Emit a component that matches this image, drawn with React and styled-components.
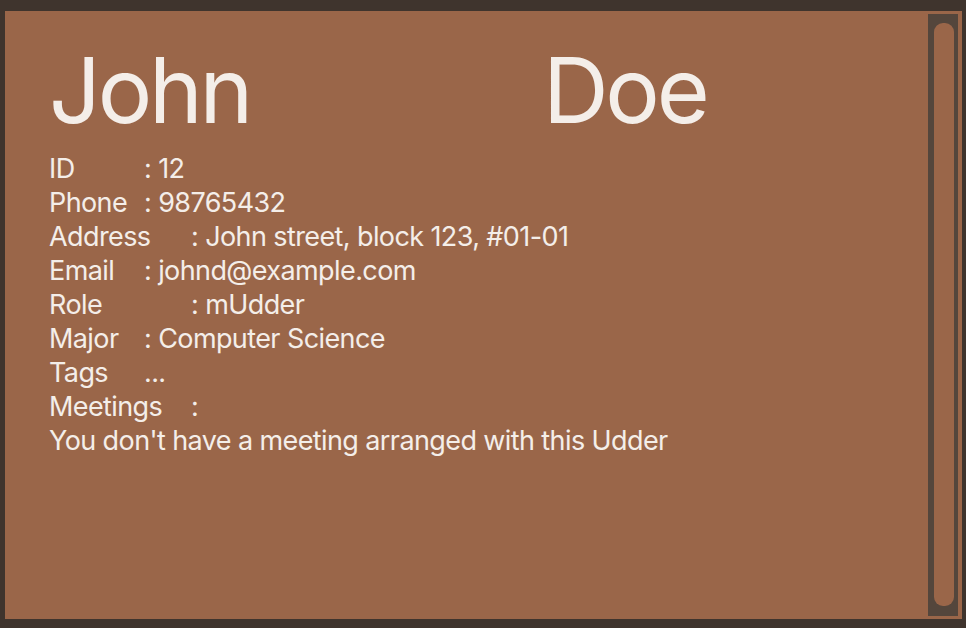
import React from "react";
import styled, { createGlobalStyle } from "styled-components";

const Global = createGlobalStyle`
  html, body { margin: 0; padding: 0; background: #3f342d; }
  body { font-family: Inter, "Noto Sans", sans-serif; }
  #root { width: 966px; height: 628px; }
`;

const Frame = styled.div`
  width: 966px;
  height: 628px;
  box-sizing: border-box;
  padding: 11px 4px 9px 5px;
  background: #3f342d;
  display: flex;
`;

const Panel = styled.div`
  flex: 1;
  background: #9a6649;
  display: flex;
  padding: 3px 4px 3px 0;
`;

const Content = styled.div`
  flex: 1;
  padding: 30px 0 0 44px;
  color: #f4eee9;
  display: flex;
  flex-direction: column;
`;

const NameRow = styled.div`
  display: flex;
  height: 106px;
  align-items: flex-start;
`;

const Name = styled.div`
  width: ${(p) => p.w}px;
  margin-top: 1px;
  font-size: 91px;
  font-weight: 400;
  letter-spacing: -3.3px;
  line-height: 1;
`;

const Details = styled.div`
  display: flex;
  flex-direction: column;
  margin-top: 1px;
`;

const Row = styled.div`
  display: flex;
  height: 34px;
  align-items: center;
  font-size: 27px;
  letter-spacing: -0.6px;
  white-space: nowrap;
`;

const Label = styled.span`
  width: ${(p) => p.w}px;
  flex: none;
`;

const Scroll = styled.div`
  width: 30px;
  background: #54463c;
  padding: 9px 4px 10px 6px;
  box-sizing: border-box;
  display: flex;
`;

const Thumb = styled.div`
  flex: 1;
  background: #9a6649;
  border-radius: 9px;
`;

const rows = [
  ["ID", 95, ": 12"],
  ["Phone", 95, ": 98765432"],
  ["Address", 142, ": John street, block 123, #01-01"],
  ["Email", 95, ": johnd@example.com"],
  ["Role", 142, ": mUdder"],
  ["Major", 95, ": Computer Science"],
  ["Tags", 95, "..."],
  ["Meetings", 142, ":"],
];

export default function App() {
  return (
    <>
      <Global />
      <Frame>
        <Panel>
          <Content>
            <NameRow>
              <Name w={494}>John</Name>
              <Name w={300}>Doe</Name>
            </NameRow>
            <Details>
              {rows.map(([l, w, v]) => (
                <Row key={l}>
                  <Label w={w}>{l}</Label>
                  <span>{v}</span>
                </Row>
              ))}
              <Row>You don't have a meeting arranged with this Udder</Row>
            </Details>
          </Content>
          <Scroll>
            <Thumb />
          </Scroll>
        </Panel>
      </Frame>
    </>
  );
}
